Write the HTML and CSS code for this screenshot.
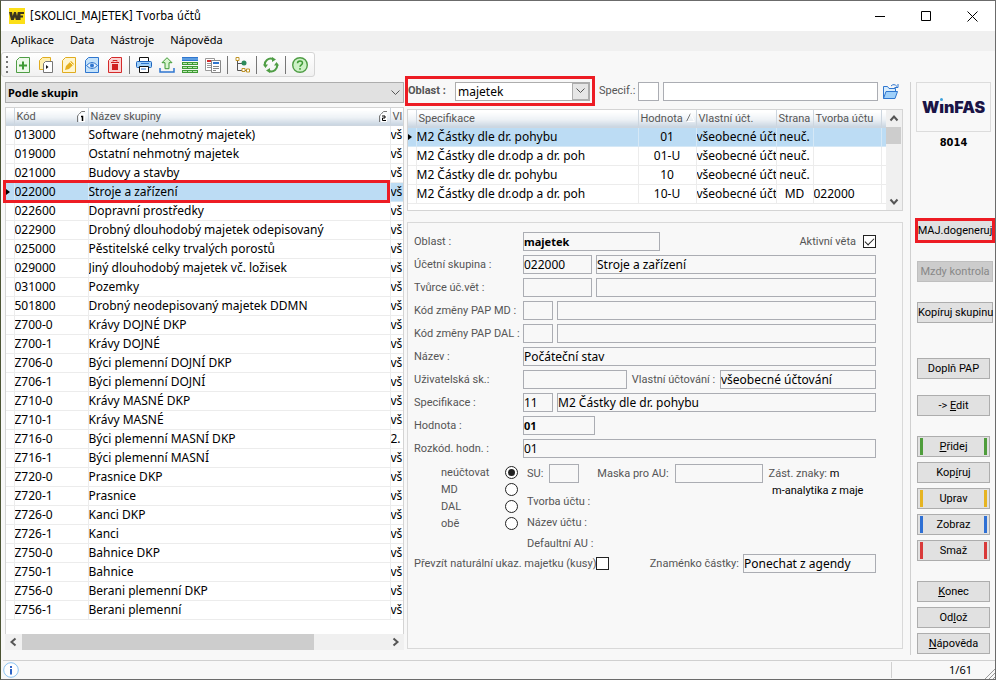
FILE: index.html
```html
<!DOCTYPE html>
<html lang="cs">
<head>
<meta charset="utf-8">
<title>[SKOLICI_MAJETEK] Tvorba účtů</title>
<link rel="stylesheet" href="styles.css">
</head>
<body>
<div class="window">
  <header class="titlebar">
    <svg class="app-icon" width="16" height="16" viewBox="0 0 16 16"><rect width="16" height="16" fill="#fcdf18"/><path d="M0 4h3l.7 4L5 4h2l1 4 .8-4H15v2h-3.500v1.500H14v2h-2.500V12H6.800L6 9l-1.200 3H2z" fill="#3a3520"/></svg>
    <h1>[SKOLICI_MAJETEK] Tvorba účtů</h1>
    <div class="window-buttons">
      <button type="button" aria-label="Minimalizovat"><svg width="11" height="11" viewBox="0 0 11 11"><path d="M0 5.500h10" stroke="#000"/></svg></button>
      <button type="button" aria-label="Maximalizovat"><svg width="11" height="11" viewBox="0 0 11 11"><path d="M.5.500h9v9h-9z" fill="none" stroke="#000"/></svg></button>
      <button type="button" aria-label="Zavřít"><svg width="11" height="11" viewBox="0 0 11 11"><path d="M.5.500l10 10M10.500.500l-10 10" stroke="#000"/></svg></button>
    </div>
  </header>
  <nav class="menu">
    <a href="#">Aplikace</a><a href="#">Data</a><a href="#">Nástroje</a><a href="#">Nápověda</a>
  </nav>
  <div class="toolbar">
    <svg class="grip" width="2" height="17" viewBox="0 0 2 17"><path d="M1 0v17" stroke="#777" stroke-width="2" stroke-dasharray="2 3"/></svg>
    <button type="button" aria-label="Přidej"><svg width="16" height="16" viewBox="0 0 16 16"><path d="M4.500.500h10v15h-13v-12z" fill="#eef9ea" stroke="#4f9d45"/><path d="M8 4.500v8M4 8.500h8" stroke="#3f9a35" stroke-width="2"/></svg></button>
    <button type="button" aria-label="Kopíruj"><svg width="16" height="16" viewBox="0 0 16 16"><path d="M4.500.500h8v12h-11v-9z" fill="#fff0b0" stroke="#e0ac20"/><path d="M7.500 4.500h7v11h-9v-9z" fill="#fff" stroke="#777"/><path d="M8 8l2.500 2L8 12z" fill="#111"/></svg></button>
    <button type="button" aria-label="Uprav"><svg width="16" height="16" viewBox="0 0 16 16"><path d="M4.500.500h10v15h-13v-12z" fill="#fff6cf" stroke="#e0ac20"/><path d="M4 13l1-4 5-5 3 3-5 5z" fill="#e6b01e"/><path d="M9 5l3 3" stroke="#fff3c0"/></svg></button>
    <button type="button" aria-label="Zobraz"><svg width="16" height="16" viewBox="0 0 16 16"><path d="M4.500.500h10v15h-13v-12z" fill="#c4e2fa" stroke="#2f76cf"/><path d="M2.500 8.500q5.500-6 11 0q-5.500 6-11 0z" fill="#e8f4ff" stroke="#2f76cf"/><circle cx="8" cy="8.500" r="2" fill="#2f76cf"/></svg></button>
    <button type="button" aria-label="Smaž"><svg width="16" height="16" viewBox="0 0 16 16"><path d="M4.500.500h10v15h-13v-12z" fill="#fbd3d3" stroke="#d42a2a"/><path d="M6 4.500V3.500h4v1M4 5.500h8" fill="none" stroke="#d01f1f"/><path d="M5 7h6v6H5z" fill="#d01f1f"/></svg></button>
    <span class="sep"></span>
    <button type="button" aria-label="Tisk"><svg width="16" height="16" viewBox="0 0 16 16"><path d="M3.500.500h9v5h-9z" fill="#fff" stroke="#111"/><rect x=".5" y="4.500" width="15" height="6" rx="1" fill="#9fd0fa" stroke="#1f64bd"/><path d="M3.500 9.500h9v6h-9z" fill="#fff" stroke="#111"/><path d="M5 12h5M5 6.500h8" stroke="#2f76cf"/></svg></button>
    <button type="button" aria-label="Export"><svg width="16" height="16" viewBox="0 0 16 16"><path d="M8 .700l5 5h-3v6H6v-6H3z" fill="#d9f5d0" stroke="#3f9a35"/><path d="M1 11v4h14v-4" fill="none" stroke="#2f76cf" stroke-width="1.500"/></svg></button>
    <button type="button" aria-label="Tabulka"><svg width="16" height="16" viewBox="0 0 16 16"><path d="M0 0h16v4H0z" fill="#2f76cf"/><path d="M0 1.500h16v1H0z" fill="#8cc4f2"/><path d="M0 5h16v3H0zM0 9h16v3H0zM0 13h16v3H0z" fill="#3f9a35"/><path d="M1 6.500h14M1 10.500h14M1 14.500h14" stroke="#b9e8ae" stroke-dasharray="4 1"/></svg></button>
    <button type="button" aria-label="Porovnat"><svg width="16" height="16" viewBox="0 0 16 16"><path d="M.5 1.500h9v12h-9z" fill="#fff" stroke="#999"/><path d="M2 4h5" stroke="#d42a2a" stroke-width="2"/><path d="M2 6.500h4M2 8.500h4M2 10.500h4" stroke="#999"/><path d="M6.500 3.500h9v12h-9z" fill="#fff" stroke="#888"/><path d="M8 6h6" stroke="#2f76cf" stroke-width="2"/><path d="M8 9.500h6M8 11.500h6M8 13.500h3" stroke="#888"/></svg></button>
    <span class="sep"></span>
    <button type="button" aria-label="Strom"><svg width="16" height="16" viewBox="0 0 16 16"><path d="M3.500 3v10.500H12M3.500 6.500H8" fill="none" stroke="#555"/><path d="M2 .500h3v3H2zM12.500 12h3v3h-3zM8 11.500h3v3H8z" fill="#fff" stroke="#c09426"/><circle cx="10" cy="6" r="2.500" fill="#2d8a5a"/></svg></button>
    <span class="sep"></span>
    <button type="button" aria-label="Obnovit"><svg width="16" height="16" viewBox="0 0 16 16"><path d="M2 9a6 6 0 0 1 8-7M14 7a6 6 0 0 1-8 7" fill="none" stroke="#4f9d45" stroke-width="2"/><path d="M0 7.500h5L2.500 11zM11 8.500h5L13.500 5zM9 0l4 2.500L9 5zM7 11l-4 2.500L7 16z" fill="#4f9d45"/></svg></button>
    <span class="sep"></span>
    <button type="button" aria-label="Nápověda"><svg width="16" height="16" viewBox="0 0 16 16"><circle cx="8" cy="8" r="7.300" fill="#cdf2c6" stroke="#4f9d45" stroke-width="1.400"/><path d="M5.500 6.200C5.500 3.200 10.500 3.200 10.500 6c0 1.800-2.500 1.800-2.500 3.800M8 11v1.800" fill="none" stroke="#3f9a35" stroke-width="1.500"/></svg></button>
  </div>

  <main class="main">
    <section class="groups">
      <div class="combo combo-wide">
        <select aria-label="Řazení"><option>Podle skupin</option></select>
        <svg class="chevron" width="9" height="6" viewBox="0 0 9 6"><path d="M.5.500l4 4 4-4" fill="none" stroke="#555"/></svg>
      </div>
      <div class="grid-box">
        <table class="grid groups-grid">
          <colgroup><col class="c-mark"><col class="c-code"><col><col class="c-cut"></colgroup>
          <thead><tr><th></th><th>Kód<svg class="flag" width="9" height="11" viewBox="0 0 9 11"><path d="M.5 11V5l4-4.500H8" fill="none" stroke="#777"/><path d="M2 3h6v8H2z" fill="#fff"/><path d="M4 5.500h1.500V10" fill="none" stroke="#000" stroke-width="1.500"/></svg></th><th>Název skupiny<svg class="flag" width="9" height="11" viewBox="0 0 9 11"><path d="M.5 11V5l4-4.500H8" fill="none" stroke="#777"/><path d="M2 3h6v8H2z" fill="#fff"/><path d="M3 5h3v2H3.500v2.500H7" fill="none" stroke="#000"/></svg></th><th>Vl</th></tr></thead>
          <tbody>
          <tr><td></td><td>013000</td><td>Software (nehmotný majetek)</td><td>vš</td></tr>
          <tr><td></td><td>019000</td><td>Ostatní nehmotný majetek</td><td>vš</td></tr>
          <tr><td></td><td>021000</td><td>Budovy a stavby</td><td>vš</td></tr>
          <tr class="selected marked"><td><i class="pointer"></i></td><td>022000</td><td>Stroje a zařízení</td><td>vš</td></tr>
          <tr><td></td><td>022600</td><td>Dopravní prostředky</td><td>vš</td></tr>
          <tr><td></td><td>022900</td><td>Drobný dlouhodobý majetek odepisovaný</td><td>vš</td></tr>
          <tr><td></td><td>025000</td><td>Pěstitelské celky trvalých porostů</td><td>vš</td></tr>
          <tr><td></td><td>029000</td><td>Jiný dlouhodobý majetek vč. ložisek</td><td>vš</td></tr>
          <tr><td></td><td>031000</td><td>Pozemky</td><td>vš</td></tr>
          <tr><td></td><td>501800</td><td>Drobný neodepisovaný majetek DDMN</td><td>vš</td></tr>
          <tr><td></td><td>Z700-0</td><td>Krávy DOJNÉ DKP</td><td>vš</td></tr>
          <tr><td></td><td>Z700-1</td><td>Krávy DOJNÉ</td><td>vš</td></tr>
          <tr><td></td><td>Z706-0</td><td>Býci plemenní DOJNÍ DKP</td><td>vš</td></tr>
          <tr><td></td><td>Z706-1</td><td>Býci plemenní DOJNÍ</td><td>vš</td></tr>
          <tr><td></td><td>Z710-0</td><td>Krávy MASNÉ DKP</td><td>vš</td></tr>
          <tr><td></td><td>Z710-1</td><td>Krávy MASNÉ</td><td>vš</td></tr>
          <tr><td></td><td>Z716-0</td><td>Býci plemenní MASNÍ DKP</td><td>2.</td></tr>
          <tr><td></td><td>Z716-1</td><td>Býci plemenní MASNÍ</td><td>vš</td></tr>
          <tr><td></td><td>Z720-0</td><td>Prasnice DKP</td><td>vš</td></tr>
          <tr><td></td><td>Z720-1</td><td>Prasnice</td><td>vš</td></tr>
          <tr><td></td><td>Z726-0</td><td>Kanci DKP</td><td>vš</td></tr>
          <tr><td></td><td>Z726-1</td><td>Kanci</td><td>vš</td></tr>
          <tr><td></td><td>Z750-0</td><td>Bahnice DKP</td><td>vš</td></tr>
          <tr><td></td><td>Z750-1</td><td>Bahnice</td><td>vš</td></tr>
          <tr><td></td><td>Z756-0</td><td>Berani plemenní DKP</td><td>vš</td></tr>
          <tr><td></td><td>Z756-1</td><td>Berani plemenní</td><td>vš</td></tr>
          </tbody>
        </table>
      </div>
      <div class="scroll-h">
        <svg width="17" height="16" viewBox="0 0 17 16"><path d="M10.500 4.500L6.500 8l4 3.500" fill="none" stroke="#555" stroke-width="2"/></svg>
        <div class="track"><div class="thumb"></div></div>
        <svg width="17" height="16" viewBox="0 0 17 16"><path d="M6.500 4.500l4 3.500-4 3.500" fill="none" stroke="#555" stroke-width="2"/></svg>
      </div>
    </section>

    <section class="accounts">
      <div class="filter">
        <div class="area-filter">
          <label for="area">Oblast :</label>
          <div class="combo combo-area">
            <select id="area"><option>majetek</option></select>
            <span class="drop"><svg width="9" height="6" viewBox="0 0 9 6"><path d="M.5.500l4 4 4-4" fill="none" stroke="#555"/></svg></span>
          </div>
        </div>
        <label for="spec">Specif.:</label>
        <input id="spec" class="w-spec">
        <input class="fill" aria-label="Název specifikace">
        <button type="button" class="folder" aria-label="Otevřít"><svg width="18" height="17" viewBox="0 0 18 17"><path d="M1.500 15.500v-12h4l1.500 2h6.500v3" fill="#d9edfd" stroke="#2f76cf"/><path d="M4 8.500h11.500l-2.500 7H1.500z" fill="#9fd0fa" stroke="#2f76cf"/><path d="M9 3q3-3 6 .500M16 1v3.500h-3.500" fill="none" stroke="#2f76cf"/></svg></button>
      </div>
      <div class="spec-list">
        <table class="grid spec-grid">
          <colgroup><col class="c-mark"><col><col class="c-val"><col class="c-own"><col class="c-side"><col class="c-make"><col class="c-end"></colgroup>
          <thead><tr><th></th><th>Specifikace</th><th class="tight">Hodnota<svg class="sort" width="9" height="9" viewBox="0 0 9 9"><path d="M.5 8.500l4-8" stroke="#777"/><path d="M4.500.500l4 8h-8" fill="none" stroke="#fff"/></svg></th><th class="tight">Vlastní účt.</th><th class="tight">Strana</th><th class="tight">Tvorba účtu</th><th></th></tr></thead>
          <tbody>
          <tr class="selected"><td><i class="pointer"></i></td><td>M2 Částky dle dr. pohybu</td><td class="center">01</td><td>všeobecné účt</td><td class="center">neuč.</td><td></td><td></td></tr>
          <tr><td></td><td>M2 Částky dle dr.odp a dr. poh</td><td class="center">01-U</td><td>všeobecné účt</td><td class="center">neuč.</td><td></td><td></td></tr>
          <tr><td></td><td>M2 Částky dle dr. pohybu</td><td class="center">10</td><td>všeobecné účt</td><td class="center">neuč.</td><td></td><td></td></tr>
          <tr><td></td><td>M2 Částky dle dr.odp a dr. poh</td><td class="center">10-U</td><td>všeobecné účt</td><td class="center">MD</td><td>022000</td><td></td></tr>
          </tbody>
        </table>
        <div class="scroll-v">
          <svg width="16" height="17" viewBox="0 0 16 17"><path d="M4.500 10.500l3.500-4 3.500 4" fill="none" stroke="#555" stroke-width="2"/></svg>
          <div class="thumb"></div>
          <svg class="down" width="16" height="17" viewBox="0 0 16 17"><path d="M4.500 6.500l3.500 4 3.500-4" fill="none" stroke="#555" stroke-width="2"/></svg>
        </div>
      </div>

      <form class="detail">
        <div class="row"><label class="name" for="f1">Oblast :</label><input id="f1" class="w-area strong" value="majetek" readonly><label class="push" for="act">Aktivní věta</label><input id="act" type="checkbox" checked></div>
        <div class="row"><label class="name" for="f2">Účetní skupina :</label><input id="f2" class="w-code" value="022000" readonly><input class="fill" aria-label="Název skupiny" value="Stroje a zařízení" readonly></div>
        <div class="row"><label class="name" for="f3">Tvůrce úč.vět :</label><input id="f3" class="w-code" readonly><input class="fill" aria-label="Název tvůrce" readonly></div>
        <div class="row"><label class="name" for="f4">Kód změny PAP MD :</label><input id="f4" class="w-short" readonly><input class="fill" aria-label="Název změny MD" readonly></div>
        <div class="row"><label class="name" for="f5">Kód změny PAP DAL :</label><input id="f5" class="w-short" readonly><input class="fill" aria-label="Název změny DAL" readonly></div>
        <div class="row"><label class="name" for="f6">Název :</label><input id="f6" class="fill" value="Počáteční stav" readonly></div>
        <div class="row"><label class="name" for="f7">Uživatelská sk.:</label><input id="f7" class="fill2" readonly><label for="f8" class="between">Vlastní účtování :</label><input id="f8" class="fill3" value="všeobecné účtování" readonly></div>
        <div class="row"><label class="name" for="f9">Specifikace :</label><input id="f9" class="w-short" value="11" readonly><input class="fill" aria-label="Název specifikace" value="M2 Částky dle dr. pohybu" readonly></div>
        <div class="row"><label class="name" for="f10">Hodnota :</label><input id="f10" class="w-value strong" value="01" readonly></div>
        <div class="row"><label class="name" for="f11">Rozkód. hodn. :</label><input id="f11" class="fill" value="01" readonly></div>
        <div class="posting">
          <div class="sides" role="radiogroup" aria-label="Strana">
            <label>neúčtovat<input type="radio" name="side" checked></label>
            <label>MD<input type="radio" name="side"></label>
            <label>DAL<input type="radio" name="side"></label>
            <label>obě<input type="radio" name="side"></label>
          </div>
          <div class="account">
            <div class="row mask"><label for="su">SU:</label><input id="su" class="w-short" readonly><label for="au" class="au">Maska pro AU:</label><input id="au" class="w-mask" readonly><span class="signs">Zást. znaky: <b>m</b></span></div>
            <div class="notes">
              <ul><li>Tvorba účtu :</li><li>Název účtu :</li><li>Defaultní AU :</li></ul>
              <p>m-analytika z maje</p>
            </div>
          </div>
        </div>
        <div class="row last"><label for="nat">Převzít naturální ukaz. majetku (kusy)</label><input id="nat" type="checkbox"><label class="push" for="sgn">Znaménko částky:</label><input id="sgn" class="w-sign" value="Ponechat z agendy" readonly></div>
      </form>
    </section>

    <aside class="side">
      <div class="logo" role="img" aria-label="WinFAS"><span>W<span class="i">ı<i></i></span>nFAS</span></div>
      <strong class="number">8014</strong>
      <div class="wide-buttons">
        <button type="button" class="hot">MAJ.dogeneruj</button>
        <button type="button" disabled>Mzdy kontrola</button>
        <button type="button">Kopíruj skupinu</button>
      </div>
      <div class="buttons spaced">
        <button type="button">Doplň PAP</button>
        <button type="button">-&gt; <u>E</u>dit</button>
      </div>
      <div class="buttons">
        <button type="button" class="bar green"><u>P</u>řidej</button>
        <button type="button">Kop<u>í</u>ruj</button>
        <button type="button" class="bar yellow">Uprav</button>
        <button type="button" class="bar blue">Zobraz</button>
        <button type="button" class="bar red">Smaž</button>
      </div>
      <div class="buttons end">
        <button type="button"><u>K</u>onec</button>
        <button type="button">Od<u>l</u>ož</button>
        <button type="button"><u>N</u>ápověda</button>
      </div>
    </aside>
  </main>

  <footer class="status">
    <svg width="16" height="16" viewBox="0 0 16 16"><circle cx="8" cy="8" r="7.300" fill="#fff" stroke="#8cc4f2"/><path d="M8 4v2M8 7v5.500" stroke="#2f66c8" stroke-width="2"/></svg>
    <span class="count">1/61</span>
    <svg class="resize" width="10" height="10" viewBox="0 0 10 10"><path d="M0 10L10 0M4 10l6-6M8 10l2-2" stroke="#999"/></svg>
  </footer>
</div>
</body>
</html>
```
FILE: styles.css
```css
* { box-sizing: border-box; }

body {
  margin: 0;
  font: 11px/16px Roboto, "Liberation Sans", sans-serif;
  color: #000;
}

button, input, select { font: inherit; color: inherit; margin: 0; }

.window {
  min-height: 100vh;
  display: flex;
  flex-direction: column;
  background: #f8f8f8;
  border: 1px solid #6b6b6b;
  border-left-color: #4c5434;
}

/* Title, menu and toolbar */
.titlebar { display: flex; align-items: center; height: 30px; padding-left: 8px; gap: 5px; background: #fff; }
.titlebar h1 { margin: 0; flex: 1; font: 12px/16px "DejaVu Sans Condensed", sans-serif; }
.window-buttons { display: flex; }
.window-buttons button { width: 46px; height: 30px; padding: 0; border: 0; background: none; display: grid; place-items: center; }

.menu { display: flex; gap: 16px; height: 20px; padding-left: 10px; background: #f0f0f0; font: 11px/18px "Noto Sans", sans-serif; }
.menu a { color: #000; text-decoration: none; }

.toolbar {
  display: flex;
  align-items: center;
  align-self: flex-start;
  gap: 7px;
  height: 25px;
  margin-top: 1px;
  padding: 0 6px 0 4px;
  border: 1px solid #d5d5d5;
  border-radius: 3px;
  background: linear-gradient(#fff, #f1f1f1);
}
.toolbar button { padding: 0; border: 0; background: none; width: 16px; height: 16px; }
.toolbar svg { display: block; }
.sep { width: 1px; height: 18px; background: #777; margin: 0 -1px; }

/* Three working areas */
.main { flex: 1; display: grid; grid-template-columns: 399fr 500fr 85px; column-gap: 3px; padding-left: 4px; }

.combo { position: relative; display: flex; align-items: center; }
.combo select { appearance: none; width: 100%; padding: 0 2px; border: 1px solid #adadad; border-radius: 0; background: #fff; }
.combo-wide select { height: 21px; background: #e1e1e1; font: bold 11px/18px "Noto Sans", sans-serif; }
.chevron { position: absolute; right: 4px; }

.groups { display: flex; flex-direction: column; padding: 5px 0 10px; min-width: 0; }
.grid-box { flex: 1; margin-top: 4px; background: #fff; border: 1px solid #d4d4d4; border-bottom: 0; }

.grid { border-collapse: collapse; table-layout: fixed; width: 100%; }
.grid th, .grid td { overflow: hidden; white-space: nowrap; padding: 0; text-align: left; height: 19px; border: solid #ececec; border-width: 0 1px 1px 0; }
.grid th {
  height: 17px;
  line-height: 15px;
  padding: 0 2px;
  font-weight: normal;
  color: #555;
  border-color: #cdd6df;
  background: linear-gradient(#fff 10%, #eef2f6 55%, #c9d5e1);
}
.grid td { font: 12px/18px "Noto Sans", sans-serif; }
.grid tr > :last-child { border-right: 0; }
.grid .center { text-align: center; }
.grid .selected td { background: #bcdcf4; border-color: #d5e8f6; }
.c-mark { width: 8px; }
.c-code { width: 74px; }
.c-cut { width: 13px; }
.c-val { width: 58px; }
.c-own { width: 80px; }
.c-side { width: 37px; }
.c-make { width: 68px; }
.c-end { width: 5px; }
.flag { float: right; margin-top: 2px; }
.sort { margin-left: 3px; }
.pointer { display: block; width: 0; border: 3px solid transparent; border-left: 4px solid #000; border-right: 0; }
.marked { position: relative; }
.marked td:last-child::after { content: ""; position: absolute; inset: -2px 13px -2px -3px; border: 3px solid #ed1c24; }

.scroll-h { display: flex; height: 16px; background: #f0f0f0; }
.scroll-h .track { flex: 1; }
.scroll-h .thumb { width: 80%; height: 16px; background: #cdcdcd; }

/* Filter line and list of specifications */
.accounts { display: flex; flex-direction: column; min-width: 0; padding: 0 4px 11px 0; color: #555; }
.accounts input, .accounts select { color: #000; }
.filter { display: flex; align-items: center; gap: 4px; height: 30px; margin: -1px 0 3px -2px; }
.area-filter { display: flex; align-items: center; align-self: stretch; padding: 0 2px 0 0; border: 3px solid #ed1c24; font-weight: bold; }
.area-filter label { width: 47px; white-space: nowrap; }
.combo-area select { width: 135px; height: 19px; font: 12px/17px "Noto Sans", sans-serif; }
.drop { position: absolute; right: 1px; width: 17px; height: 17px; display: grid; place-items: center; border: 1px solid #adadad; background: #e6e6e6; pointer-events: none; }
.filter > label { width: 35px; white-space: nowrap; }
.accounts input:not([type]) {
  height: 19px;
  padding: 0;
  border: 1px solid #abadb3;
  border-radius: 0;
  background: transparent;
  font: 12px/17px "Noto Sans", sans-serif;
  min-width: 0;
}
.accounts .filter input:not([type]) { background: #fff; }
.accounts input.strong:not([type]) { font-weight: bold; font-size: 11px; }
.w-spec { width: 21px; }
.fill { flex: 1; }
.folder { width: 18px; height: 17px; padding: 0; border: 0; background: none; margin-right: 3px; }
.folder svg { display: block; }

.spec-list { display: flex; border: 1px solid #d4d4d4; height: 102px; background: #fff; }
.spec-grid { flex: 1; width: 0; align-self: flex-start; color: #000; }
.scroll-v { display: flex; flex-direction: column; width: 16px; background: #f0f0f0; }
.scroll-v .thumb { height: 17px; margin-right: 1px; background: #cdcdcd; }
.scroll-v .down { margin-top: auto; }

/* Detail of the account */
.detail { flex: 1; display: flex; flex-direction: column; gap: 4px; margin-top: 11px; padding: 9px 26px 0 6px; border: 1px solid #d9d9d9; }
.row { display: flex; align-items: center; gap: 4px; height: 19px; white-space: nowrap; }
.name { width: 105px; }
.push { margin-left: auto; }
.w-area { width: 137px; }
.w-code { width: 69px; }
.w-short { width: 30px; }
.w-value { width: 72px; }
.w-mask { width: 88px; }
.w-sign { width: 133px; }
.fill2 { flex: 104; }
.fill3 { flex: 157; }
.between { width: 85px; text-align: center; }

input[type="checkbox"] { appearance: none; width: 13px; height: 13px; border: 1px solid #222; background: #fff; display: grid; place-items: center; margin-left: 3px; }
input[type="checkbox"]:checked::after { content: ""; width: 8px; height: 4px; border: solid #222; border-width: 0 0 1px 1px; transform: translateY(-1px) rotate(-45deg); }
input[type="radio"] { appearance: none; width: 13px; height: 13px; border: 1px solid #222; border-radius: 50%; background: #fff; display: grid; place-items: center; }
input[type="radio"]:checked::after { content: ""; width: 7px; height: 7px; border-radius: 50%; background: #222; }
.last { margin-top: -4px; }
.last input[type="checkbox"] { margin-left: -4px; }

.posting { display: flex; gap: 9px; margin-top: 2px; }
.sides { width: 104px; padding-left: 27px; flex: none; }
.sides label { display: flex; align-items: center; justify-content: space-between; height: 17px; }
.account { flex: 1; min-width: 0; }
.mask { gap: 6px; }
.au { margin-left: 12px; }
.signs { color: #555; }
.signs b { font-weight: normal; color: #000; }
.notes { display: flex; }
.notes ul { width: 245px; margin: 0; padding: 8px 0 0; list-style: none; line-height: 21px; }
.notes p { margin: 0; color: #000; }

/* Command column */
.side { display: flex; flex-direction: column; align-items: flex-start; margin: 5px 0 5px; padding-left: 5px; border-left: 1px solid #d0d0d0; }
.logo { display: grid; place-items: center; width: 75px; height: 50px; border: 1px solid #dcdcdc; font: 900 16px/20px Inter, sans-serif; color: #1a1446; }
.logo .i { position: relative; }
.logo .i i { position: absolute; left: 1px; top: 1px; width: 3px; height: 3px; border-radius: 50%; background: #3aa0dc; }
.number { width: 75px; text-align: center; margin-top: 2px; font: bold 11px/18px "DejaVu Sans Condensed", sans-serif; }
.side button { height: 21px; padding: 0; border: 1px solid #adadad; background: #e1e1e1; white-space: nowrap; }
.wide-buttons { display: flex; flex-direction: column; gap: 20px; margin: 68px 0 0 1px; }
.wide-buttons button { width: 76px; }
.side button:disabled { color: #888; background: #ccc; border-color: #bfbfbf; }
.side .hot { outline: 3px solid #ed1c24; outline-offset: -1px; border: 0; }
.buttons { display: flex; flex-direction: column; gap: 5px; margin: 20px 0 0 1px; }
.buttons button { width: 73px; position: relative; }
.buttons.spaced { gap: 16px; margin-top: 35px; }
.bar::before, .bar::after { content: ""; position: absolute; top: 1px; bottom: 1px; width: 3px; background: currentcolor; }
.bar::before { left: 2px; }
.bar::after { right: 2px; }
.green::before, .green::after { background: #4f9d3c; }
.yellow::before, .yellow::after { background: #e6b422; }
.blue::before, .blue::after { background: #2f70d4; }
.red::before, .red::after { background: #d93a3a; }

.status { position: relative; display: flex; align-items: center; height: 19px; margin-left: 2px; border-top: 1px solid #d0d0d0; }
.count { margin-left: auto; width: 104px; height: 16px; padding-right: 23px; border-left: 1px solid #d0d0d0; text-align: right; font: 11px/16px "Noto Sans", sans-serif; }
.resize { position: absolute; right: 0; bottom: 0; }
```
